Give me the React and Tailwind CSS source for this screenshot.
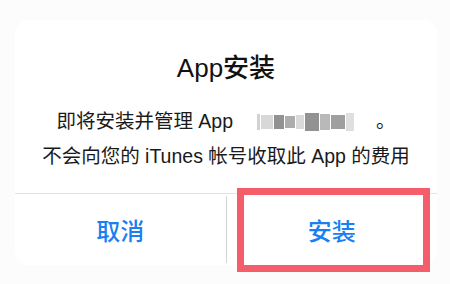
export default function App() {
  const font = { fontFamily: '"Liberation Sans", "Noto Sans CJK SC", sans-serif' };

  return (
    <div className="relative w-[450px] h-[284px] overflow-hidden bg-[#fcfcfc] pt-[20px] px-[15px]" style={font}>
      <div className="w-[422px] h-[245px] rounded-[14px] bg-white flex flex-col">
        <h1 className="pt-[32px] text-center text-[26px] leading-[32px] font-medium text-[#111]">App安装</h1>

        <div className="mt-[20px] text-center text-[19.5px] leading-[35px] text-[#1a1a1a]">
          <p className="flex items-center justify-center">
            <span>即将安装并管理 App</span>
            <span className="ml-[24px] mr-[22px] flex items-center gap-[1px] opacity-80">
              <span className="w-[3px] h-[16px] bg-[#c8c8c8]" />
              <span className="w-[12px] h-[14px] bg-[#cfcfcf]" />
              <span className="w-[10px] h-[14px] bg-[#777]" />
              <span className="w-[10px] h-[12px] bg-[#999]" />
              <span className="w-[8px] h-[14px] bg-[#d2d2d2]" />
              <span className="w-[14px] h-[18px] bg-[#777]" />
              <span className="w-[10px] h-[16px] bg-[#a8a8a8]" />
              <span className="w-[14px] h-[14px] bg-[#888]" />
              <span className="w-[8px] h-[18px] bg-[#d8d8d8]" />
            </span>
            <span>。</span>
          </p>
          <p>不会向您的 iTunes 帐号收取此 App 的费用</p>
        </div>

        <div className="mt-auto h-[72px] border-t border-[#e3e3e3] flex">
          <button className="flex-1 flex items-center justify-center pt-[4px] text-[24px] font-medium text-[#1a7ff2]">取消</button>
          <div className="w-px my-[2px] bg-[#d4d4d4]" />
          <button className="flex-1 flex items-center justify-center pt-[4px] text-[24px] font-medium text-[#1a7ff2]">安装</button>
        </div>
      </div>

      <div className="absolute left-[237px] top-[188px] w-[193px] h-[84px] border-[7px] border-[#f35e6a]" />
    </div>
  );
}
